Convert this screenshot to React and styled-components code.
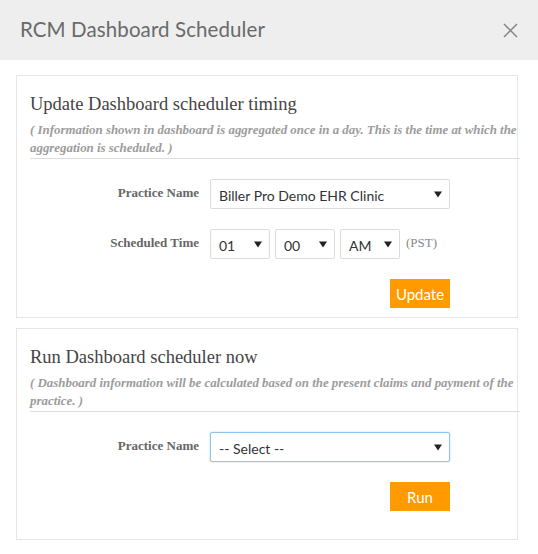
import React from "react";
import styled, { createGlobalStyle } from "styled-components";

const Global = createGlobalStyle`
  html, body { margin: 0; padding: 0; background: #fff; }
  body { font-family: "Lato", "Liberation Sans", sans-serif; }
  * { box-sizing: border-box; }
`;

const Modal = styled.div`
  width: 538px;
  min-height: 554px;
  background: #fff;
`;

const Header = styled.div`
  height: 60px;
  background: #eeeeee;
  display: flex;
  align-items: center;
  justify-content: space-between;
  padding: 0 20px 0 20px;
`;

const Title = styled.h4`
  margin: 0 0 2px;
  font-family: "Lato", sans-serif;
  font-weight: 400;
  font-size: 20.5px;
  letter-spacing: 0.1px;
  color: #6a6a6a;
`;

const Close = styled.button`
  border: 0;
  background: none;
  padding: 0;
  margin-top: 1px;
  display: flex;
  cursor: pointer;
`;

const Body = styled.div`
  padding: 15px 20px 15px 16px;
  display: flex;
  flex-direction: column;
  gap: 10px;
`;

const Panel = styled.section`
  width: 502px;
  border: 1px solid #e6e6e6;
  padding: 16px 0 ${(p) => p.$bottom}px 13px;
`;

const Heading = styled.h3`
  margin: 0;
  font-family: "Liberation Serif", serif;
  font-weight: 400;
  font-size: 18.5px;
  line-height: 24px;
  color: #444;
`;

const Note = styled.p`
  margin: 5px -3px 0 0;
  font-family: "Liberation Serif", serif;
  font-style: italic;
  font-weight: 700;
  font-size: 12.9px;
  line-height: 18px;
  color: #9c9c9c;
  padding: 0 0 1px;
  border-bottom: 1px solid #ddd;
`;

const Form = styled.div`
  display: flex;
  flex-direction: column;
  gap: 20px;
  padding-top: 20px;
`;

const Row = styled.div`
  display: grid;
  grid-template-columns: 169px auto;
  column-gap: 11px;
  align-items: start;
`;

const Label = styled.label`
  text-align: right;
  font-family: "Liberation Serif", serif;
  font-weight: 700;
  font-size: 13px;
  color: #666;
  padding-top: 6px;
`;

const Controls = styled.div`
  display: flex;
  align-items: flex-start;
  gap: 5px;
`;

const SelectWrap = styled.div`
  position: relative;
  width: ${(p) => p.$w}px;
  height: 30px;
`;

const Select = styled.select`
  appearance: none;
  width: 100%;
  height: 100%;
  border: 1px solid ${(p) => (p.$focus ? "#8fc4ef" : "#dcdcdc")};
  box-shadow: ${(p) => (p.$focus ? "0 0 2px rgba(102,175,233,0.5)" : "none")};
  border-radius: 2px;
  background: #fff;
  font-family: "Lato", sans-serif;
  font-size: 14px;
  color: #333;
  padding: 2px 0 0 8px;
  outline: none;
`;

const Arrow = styled.svg`
  position: absolute;
  right: 8px;
  top: 12px;
  pointer-events: none;
`;

const Tz = styled.span`
  font-family: "Liberation Serif", serif;
  font-size: 13px;
  color: #888;
  padding: 6px 0 0 1px;
`;

const Actions = styled.div`
  display: flex;
  justify-content: flex-end;
  width: 420px;
`;

const Button = styled.button`
  width: 60px;
  height: 29px;
  border: 0;
  border-radius: 0;
  background: #ff9a00;
  color: #fff;
  font-family: "Lato", sans-serif;
  font-size: 15px;
  padding: 0;
  cursor: pointer;
`;

function Dropdown({ w, value, options, focus }) {
  return (
    <SelectWrap $w={w}>
      <Select defaultValue={value} $focus={focus}>
        {options.map((o) => (
          <option key={o}>{o}</option>
        ))}
      </Select>
      <Arrow width="8" height="7" viewBox="0 0 8 7">
        <path d="M0 0.5 L8 0.5 L4 6.5 Z" fill="#222" />
      </Arrow>
    </SelectWrap>
  );
}

export default function App() {
  return (
    <>
      <Global />
      <Modal>
        <Header>
          <Title>RCM Dashboard Scheduler</Title>
          <Close aria-label="Close">
            <svg width="15" height="15" viewBox="0 0 15 15">
              <path d="M1 1 L14 14 M14 1 L1 14" stroke="#858585" strokeWidth="1.5" />
            </svg>
          </Close>
        </Header>
        <Body>
          <Panel $bottom={9}>
            <Heading>Update Dashboard scheduler timing</Heading>
            <Note>
              ( Information shown in dashboard is aggregated once in a day. This is the time at which the
              aggregation is scheduled. )
            </Note>
            <Form>
              <Row>
                <Label>Practice Name</Label>
                <Dropdown w={240} value="Biller Pro Demo EHR Clinic" options={["Biller Pro Demo EHR Clinic"]} />
              </Row>
              <Row>
                <Label>Scheduled Time</Label>
                <Controls>
                  <Dropdown w={60} value="01" options={["01", "02", "03"]} />
                  <Dropdown w={60} value="00" options={["00", "15", "30", "45"]} />
                  <Dropdown w={60} value="AM" options={["AM", "PM"]} />
                  <Tz>(PST)</Tz>
                </Controls>
              </Row>
              <Actions>
                <Button>Update</Button>
              </Actions>
            </Form>
          </Panel>
          <Panel $bottom={28}>
            <Heading>Run Dashboard scheduler now</Heading>
            <Note>
              ( Dashboard information will be calculated based on the present claims and payment of the
              practice. )
            </Note>
            <Form>
              <Row>
                <Label>Practice Name</Label>
                <Dropdown w={240} value="-- Select --" options={["-- Select --", "Biller Pro Demo EHR Clinic"]} focus />
              </Row>
              <Actions>
                <Button>Run</Button>
              </Actions>
            </Form>
          </Panel>
        </Body>
      </Modal>
    </>
  );
}
